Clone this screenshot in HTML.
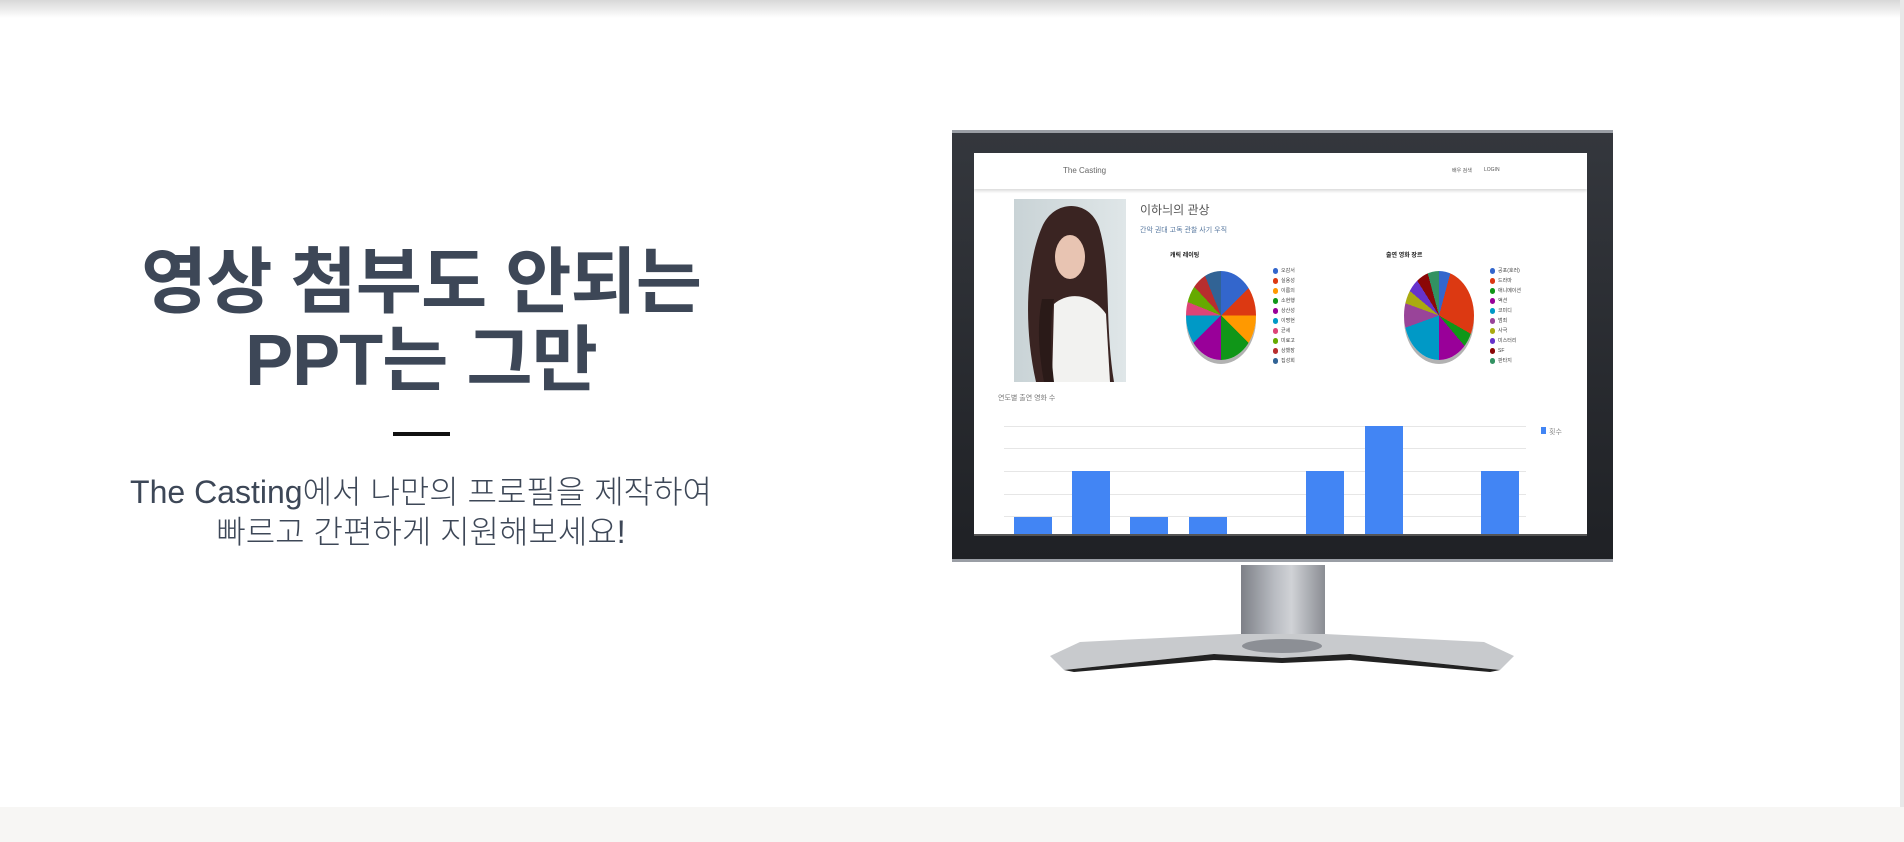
<!DOCTYPE html>
<html><head><meta charset="utf-8"><style>
*{margin:0;padding:0;box-sizing:border-box}
body{width:1904px;height:842px;position:relative;overflow:hidden;background:#fff;font-family:"Liberation Sans","Noto Sans CJK KR",sans-serif}
.a{position:absolute}
.topsh{left:0;top:0;width:1904px;height:18px;background:linear-gradient(#d8d8d8,#fff)}
.foot{left:0;top:807px;width:1904px;height:35px;background:#f7f6f4}
h1{position:absolute;left:80px;width:682px;top:244px;text-align:center;font-size:72px;line-height:78px;font-weight:700;color:#3d4757;letter-spacing:-1px}
.sub{left:60px;width:722px;top:472px;text-align:center;font-size:32px;line-height:40px;font-weight:300;color:#3d4757}
.bez{left:952px;top:130px;width:661px;height:432px;background:linear-gradient(#34373d,#1f2125);border-top:3px solid #9a9ea5;border-bottom:3px solid #9a9ea5}
.scr{left:974px;top:153px;width:613px;height:383px;background:#fff;overflow:hidden;border-bottom:2px solid #555}
.nav{left:0;top:0;width:613px;height:36px;background:#fff;box-shadow:0 2px 3px rgba(0,0,0,.15)}
.t{position:absolute;white-space:nowrap;color:#555}
.lg{position:absolute;font-size:5px;color:#444;line-height:10px;white-space:nowrap}
.lg i{display:inline-block;width:5px;height:6px;border-radius:3px;margin-right:3px;vertical-align:middle}
.grid{position:absolute;left:30px;width:522px;height:1px;background:#e6e6e6}
.bar{position:absolute;background:#4285f4;width:38px;height:120px}
</style></head><body>
<div class="a topsh"></div>
<h1>영상 첨부도 안되는<br>PPT는 그만</h1>
<div class="a" style="left:393px;top:432px;width:57px;height:4px;background:#111"></div>
<div class="a sub">The Casting에서 나만의 프로필을 제작하여<br>빠르고 간편하게 지원해보세요!</div>

<div class="a bez"></div>
<div class="a scr">
 <div class="a nav"></div>
 <div class="t" style="left:89px;top:13px;font-size:8px;color:#666">The Casting</div>
 <div class="t" style="left:478px;top:14px;font-size:5px">배우 검색</div>
 <div class="t" style="left:510px;top:14px;font-size:5px">LOGIN</div>
 <div class="a" style="left:40px;top:46px;width:112px;height:183px;background:linear-gradient(90deg,#c9d3d6,#dfe6e8)">
  <svg width="112" height="183"><path d="M22 183 C8 120 14 60 28 28 C40 0 75 0 85 28 C98 70 90 120 100 183 Z" fill="#3a2422"/><ellipse cx="56" cy="58" rx="15" ry="22" fill="#e8c4b2"/><path d="M40 105 C55 92 78 95 92 115 L96 183 L38 183 Z" fill="#f2f2f0"/><path d="M28 100 C22 130 26 160 30 183 L40 183 C36 150 36 120 40 100Z" fill="#2a1a18"/></svg>
 </div>
 <div class="t" style="left:166px;top:48px;font-size:12px;color:#555">이하늬의 관상</div>
 <div class="t" style="left:166px;top:72px;font-size:7px;color:#5a7aa0">간악 권대 고독 관찰 사기 우직</div>
 <div class="t" style="left:196px;top:97px;font-size:6px;color:#222;font-weight:700">캐릭 레이팅</div>
 <div class="t" style="left:412px;top:97px;font-size:6px;color:#222;font-weight:700">출연 영화 장르</div>
 <div class="a" style="left:212px;top:118px;width:70px;height:89px;border-radius:50%;background:conic-gradient(#3366cc 0 45deg,#dc3912 45deg 90deg,#ff9900 90deg 135deg,#109618 135deg 180deg,#990099 180deg 225deg,#0099c6 225deg 270deg,#dd4477 270deg 292deg,#66aa00 292deg 317deg,#b82e2e 317deg 338deg,#316395 338deg 360deg);box-shadow:0 4px 0 rgba(0,0,0,.3)"></div>
 <div class="a" style="left:430px;top:118px;width:70px;height:89px;border-radius:50%;background:conic-gradient(#3366cc 0 15deg,#dc3912 15deg 120deg,#109618 120deg 140deg,#990099 140deg 180deg,#0099c6 180deg 250deg,#994499 250deg 290deg,#aaaa11 290deg 310deg,#6633cc 310deg 328deg,#8b0707 328deg 345deg,#329262 345deg 360deg);box-shadow:0 4px 0 rgba(0,0,0,.3)"></div>
 <div class="lg" style="left:299px;top:113px"><i style="background:#3366cc"></i>오감서<br><i style="background:#dc3912"></i>실용성<br><i style="background:#ff9900"></i>이름의<br><i style="background:#109618"></i>소현행<br><i style="background:#990099"></i>상산성<br><i style="background:#0099c6"></i>이명현<br><i style="background:#dd4477"></i>균세<br><i style="background:#66aa00"></i>미료고<br><i style="background:#b82e2e"></i>상했장<br><i style="background:#316395"></i>집성회</div>
 <div class="lg" style="left:516px;top:113px"><i style="background:#3366cc"></i>공포(호러)<br><i style="background:#dc3912"></i>드라마<br><i style="background:#109618"></i>애니메이션<br><i style="background:#990099"></i>액션<br><i style="background:#0099c6"></i>코미디<br><i style="background:#994499"></i>범죄<br><i style="background:#aaaa11"></i>사극<br><i style="background:#6633cc"></i>미스터리<br><i style="background:#8b0707"></i>SF<br><i style="background:#329262"></i>판타지</div>
 <div class="t" style="left:24px;top:240px;font-size:7px;color:#777">연도별 출연 영화 수</div>
 <div class="grid" style="top:273px"></div><div class="grid" style="top:295px"></div><div class="grid" style="top:318px"></div><div class="grid" style="top:341px"></div><div class="grid" style="top:363px"></div>
 <div class="bar" style="left:40px;top:364px"></div>
 <div class="bar" style="left:98px;top:318px"></div>
 <div class="bar" style="left:156px;top:364px"></div>
 <div class="bar" style="left:215px;top:364px"></div>
 <div class="bar" style="left:332px;top:318px"></div>
 <div class="bar" style="left:391px;top:273px"></div>
 <div class="bar" style="left:507px;top:318px"></div>
 <div class="a" style="left:567px;top:274px;width:5px;height:7px;background:#4285f4"></div>
 <div class="t" style="left:575px;top:274px;font-size:7px;color:#888">횟수</div>
</div>
<div class="a" style="left:1241px;top:565px;width:84px;height:80px;background:linear-gradient(90deg,#7d8087,#b9bcc2 40%,#d0d2d6 60%,#8a8d93)"></div>
<svg class="a" style="left:1050px;top:630px" width="464" height="42"><path d="M30 12 L190 4 L275 4 L434 12 L464 26 L450 40 L300 24 L232 28 L164 24 L14 40 L0 26 Z" fill="#c8cacd"/><path d="M14 40 L164 24 L232 28 L300 24 L450 40 L440 42 L300 30 L232 33 L164 30 L24 42 Z" fill="#222"/><ellipse cx="232" cy="16" rx="40" ry="7" fill="#8c8f95"/></svg>
<div class="a" style="left:1900px;top:0;width:4px;height:807px;background:#e8e8e8"></div>
<div class="a foot"></div>
</body></html>
